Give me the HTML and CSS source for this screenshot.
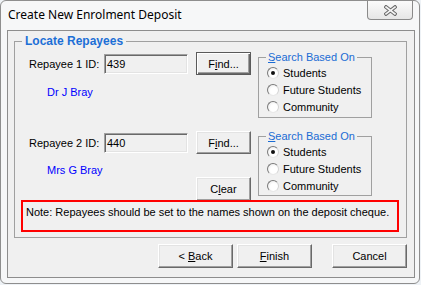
FILE: index.html
```html
<!DOCTYPE html>
<html>
<head>
<meta charset="utf-8">
<link rel="stylesheet" href="styles.css">
</head>
<body>
<div class="window">
  <div class="titlebar">
    <span class="title">Create New Enrolment Deposit</span>
    <button class="close" aria-label="Close">
      <svg width="13" height="11" viewBox="0 0 13 11">
        <path d="M2 2 L11 9 M11 2 L2 9" stroke="#6a6a6a" stroke-width="3.6" stroke-linecap="square" fill="none"/>
        <path d="M2 2 L11 9 M11 2 L2 9" stroke="#f4f4f4" stroke-width="1.6" stroke-linecap="square" fill="none"/>
      </svg>
    </button>
  </div>
  <div class="client">
    <fieldset class="group">
      <legend class="group-legend">Locate Repayees</legend>

      <div class="section section-1">
        <div class="left">
          <div class="idrow">
            <span class="label">Repayee 1 ID:</span>
            <div class="input">439</div>
            <button class="btn btn-find btn-default">F<u>i</u>nd...</button>
          </div>
          <div class="name">Dr J Bray</div>
        </div>
        <fieldset class="search">
          <legend class="search-legend"><u>S</u>earch Based On</legend>
          <div class="radio-row"><span class="radio checked"></span><span>Students</span></div>
          <div class="radio-row"><span class="radio"></span><span>Future Students</span></div>
          <div class="radio-row"><span class="radio"></span><span>Community</span></div>
        </fieldset>
      </div>

      <div class="section section-2">
        <div class="left">
          <div class="idrow">
            <span class="label">Repayee 2 ID:</span>
            <div class="input">440</div>
            <button class="btn btn-find">F<u>i</u>nd...</button>
          </div>
          <div class="name">Mrs G Bray</div>
          <button class="btn btn-clear">C<u>l</u>ear</button>
        </div>
        <fieldset class="search">
          <legend class="search-legend"><u>S</u>earch Based On</legend>
          <div class="radio-row"><span class="radio checked"></span><span>Students</span></div>
          <div class="radio-row"><span class="radio"></span><span>Future Students</span></div>
          <div class="radio-row"><span class="radio"></span><span>Community</span></div>
        </fieldset>
      </div>

      <div class="note">Note: Repayees should be set to the names shown on the deposit cheque.</div>
    </fieldset>

    <div class="actions">
      <button class="btn btn-action">&lt; <u>B</u>ack</button>
      <button class="btn btn-action"><u>F</u>inish</button>
      <button class="btn btn-action btn-cancel">Cancel</button>
    </div>
  </div>
</div>
</body>
</html>
```

FILE: styles.css
```css
* { box-sizing: border-box; }
html, body { margin: 0; padding: 0; }
body {
  width: 421px;
  height: 285px;
  overflow: hidden;
  background: #eef2f6;
  font-family: "Liberation Sans", Arial, sans-serif;
  font-size: 11px;
  color: #000;
}
.window {
  width: 420px;
  height: 284px;
  border: 1px solid #8e8e8e;
  border-radius: 6px;
  background: #f6f7f8;
  display: flex;
  flex-direction: column;
}
.titlebar {
  height: 29px;
  flex: none;
  display: flex;
  align-items: flex-start;
}
.title {
  font-family: "Noto Sans", "DejaVu Sans", sans-serif;
  font-size: 12px;
  line-height: 16px;
  margin: 6px 0 0 7px;
  color: #000;
}
.close {
  margin-left: auto;
  margin-right: 6px;
  width: 46px;
  height: 19px;
  padding: 0;
  border: 1px solid #8a8a8a;
  border-top: none;
  border-radius: 0 0 4px 4px;
  background: linear-gradient(#fbfbfb, #e6e6e6);
  display: flex;
  align-items: center;
  justify-content: center;
}
.client {
  flex: 1;
  margin: 0 4px 5px 6px;
  border: 1px solid #8d8d8d;
  background: #f0f0f0;
  display: flex;
  flex-direction: column;
}
.group {
  margin: 3px 7px 0 6px;
  padding: 0 0 5px 0;
  border: 1px solid #a0a0a0;
  min-width: 0;
}
.group-legend {
  margin-left: 7px;
  padding: 0 3px;
  font-weight: bold;
  font-size: 12px;
  line-height: 14px;
  color: #1c6fd6;
}
.section {
  display: flex;
  align-items: flex-start;
  padding-left: 14px;
}
.section-2 { margin-top: 11px; }
.left {
  display: flex;
  flex-direction: column;
}
.idrow {
  display: flex;
  align-items: center;
  height: 23px;
  margin-top: 4px;
}
.section-2 .idrow { margin-top: 2px; }
.label { width: 75px; }
.input {
  width: 84px;
  height: 20px;
  padding-left: 2px;
  line-height: 18px;
  border: 1px solid;
  border-color: #a0a0a0 #ffffff #ffffff #a0a0a0;
  box-shadow: inset 1px 1px #696969, inset -1px -1px #e3e3e3;
  background: #f0f0f0;
}
.btn {
  padding: 0;
  font-family: "Liberation Sans", Arial, sans-serif;
  font-size: 11px;
  color: #000;
  background: #f0f0f0;
  border: 1px solid;
  border-color: #ffffff #696969 #696969 #ffffff;
  box-shadow: inset -1px -1px #a0a0a0, inset 1px 1px #e3e3e3;
}
.btn-default {
  border-color: #5a5a5a;
  box-shadow: inset 1px 1px #ffffff, inset -1px -1px #696969, inset -2px -2px #a0a0a0;
}
.btn-find {
  width: 55px;
  height: 23px;
  margin-left: 8px;
}
.name {
  margin: 10px 0 0 18px;
  line-height: 14px;
  color: #0000ff;
}
.section-2 .name { margin-top: 9px; }
.btn-clear {
  align-self: flex-end;
  width: 55px;
  height: 24px;
}
.search {
  margin: 2px 0 0 7px;
  width: 114px;
  padding: 0 0 2px 0;
  border: 1px solid #a0a0a0;
  min-width: 0;
}
.section-2 .search { margin-top: 0; padding-bottom: 1px; }
.search-legend {
  margin-left: 7px;
  padding: 0 2px;
  line-height: 14px;
  color: #1a6cd4;
}
.radio-row {
  display: flex;
  align-items: center;
  gap: 4px;
  height: 17px;
  padding-left: 8px;
}
.radio {
  width: 12px;
  height: 12px;
  flex: none;
  border-radius: 50%;
  border: 1px solid;
  border-color: #7a7a7a #d4d4d4 #e8e8e8 #7a7a7a;
  background: radial-gradient(circle at 60% 60%, #ffffff 40%, #e4e4e4 100%);
  display: flex;
  align-items: center;
  justify-content: center;
}
.radio.checked::after {
  content: "";
  width: 4px;
  height: 4px;
  border-radius: 50%;
  background: #111;
}
.note {
  margin: 0 0 0 6px;
  width: 378px;
  height: 32px;
  border: 2px solid #ff0000;
  padding: 3px 0 0 3px;
  line-height: 14px;
  position: relative;
  margin-top: -1px;
}
.actions {
  display: flex;
  justify-content: flex-end;
  gap: 4px;
  margin: 6px 7px 0 0;
}
.btn-action {
  width: 75px;
  height: 24px;
}
.btn-cancel { margin-left: 16px; }
```
